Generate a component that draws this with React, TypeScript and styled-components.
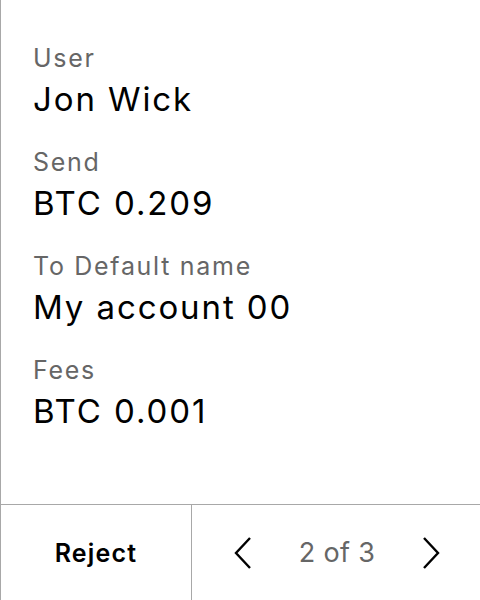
import React from "react";
import styled, { createGlobalStyle } from "styled-components";

const Global = createGlobalStyle`
  html, body { margin: 0; padding: 0; background: #fff; }
  body { font-family: Inter, "Noto Sans", sans-serif; }
`;

const Screen = styled.div`
  width: 480px;
  height: 600px;
  box-sizing: border-box;
  border-left: 1px solid #a8a8a8;
  display: flex;
  flex-direction: column;
  background: #fff;
`;

const Content = styled.div`
  flex: 1;
  padding: 42px 0 0 32px;
  display: flex;
  flex-direction: column;
  gap: 22px;
`;

const Field = styled.div`
  display: flex;
  flex-direction: column;
`;

const Label = styled.div`
  font-size: 25px;
  line-height: 32px;
  letter-spacing: 1.7px;
  color: #666;
`;

const Value = styled.div`
  font-size: 33px;
  line-height: 50px;
  letter-spacing: 1.9px;
  color: #000;
`;

const Footer = styled.div`
  height: 96px;
  box-sizing: border-box;
  border-top: 1px solid #a8a8a8;
  display: flex;
`;

const RejectCell = styled.button`
  width: 191px;
  border: none;
  border-right: 1px solid #a8a8a8;
  background: none;
  font-family: inherit;
  font-size: 25px;
  font-weight: 600;
  letter-spacing: 1.2px;
  color: #000;
  padding: 0;
`;

const Pager = styled.div`
  flex: 1;
  display: flex;
  align-items: center;
  justify-content: space-between;
  padding: 0 40px 0 42px;
`;

const Arrow = styled.button`
  border: none;
  background: none;
  padding: 0;
  display: flex;
`;

const PageText = styled.span`
  font-size: 27px;
  letter-spacing: 0.3px;
  color: #666;
`;

const Chevron = ({ dir }: { dir: "left" | "right" }) => (
  <svg width="18" height="32" viewBox="0 0 18 32" fill="none">
    <path
      d={dir === "left" ? "M16 1 L2 16 L16 31" : "M2 1 L16 16 L2 31"}
      stroke="#000"
      strokeWidth="2.4"
    />
  </svg>
);

const fields = [
  { label: "User", value: "Jon Wick" },
  { label: "Send", value: "BTC 0.209" },
  { label: "To Default name", value: "My account 00" },
  { label: "Fees", value: "BTC 0.001" },
];

export default function App() {
  return (
    <>
      <Global />
      <Screen>
        <Content>
          {fields.map((f) => (
            <Field key={f.label}>
              <Label>{f.label}</Label>
              <Value>{f.value}</Value>
            </Field>
          ))}
        </Content>
        <Footer>
          <RejectCell>Reject</RejectCell>
          <Pager>
            <Arrow>
              <Chevron dir="left" />
            </Arrow>
            <PageText>2 of 3</PageText>
            <Arrow>
              <Chevron dir="right" />
            </Arrow>
          </Pager>
        </Footer>
      </Screen>
    </>
  );
}
